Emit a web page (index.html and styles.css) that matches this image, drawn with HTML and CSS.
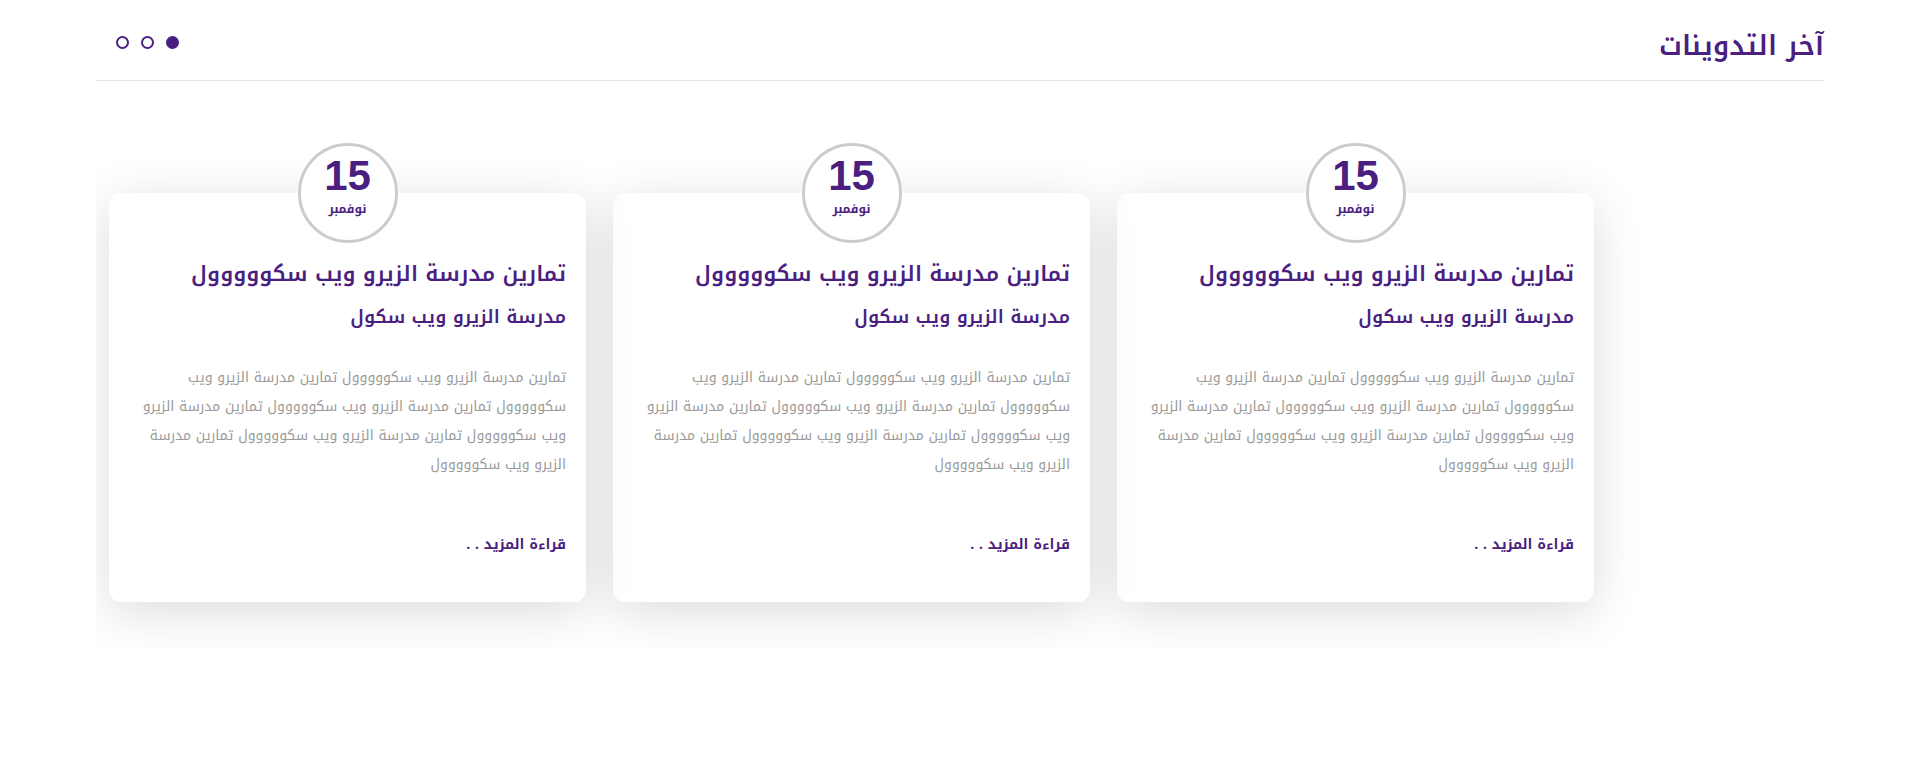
FILE: index.html
```html
<!DOCTYPE html>
<html lang="ar" dir="rtl">
<head>
<meta charset="utf-8">
<title>آخر التدوينات</title>
<link rel="stylesheet" href="styles.css">
</head>
<body>
<section class="blog">
  <header class="blog-head">
    <h2 class="blog-title">آخر التدوينات</h2>
    <div class="dots">
      <span class="dot active"></span>
      <span class="dot"></span>
      <span class="dot"></span>
    </div>
  </header>
  <div class="stage-outer">
    <div class="stage">
      <article class="card">
        <div class="date"><span class="day">15</span><span class="month">نوفمبر</span></div>
        <h3 class="card-title">تمارين مدرسة الزيرو ويب سكووووول</h3>
        <h4 class="card-sub">مدرسة الزيرو ويب سكول</h4>
        <p class="card-text">تمارين مدرسة الزيرو ويب سكووووول تمارين مدرسة الزيرو ويب سكووووول تمارين مدرسة الزيرو ويب سكووووول تمارين مدرسة الزيرو ويب سكووووول تمارين مدرسة الزيرو ويب سكووووول تمارين مدرسة الزيرو ويب سكووووول</p>
        <a class="more" href="#">قراءة المزيد . .</a>
      </article>
      <article class="card">
        <div class="date"><span class="day">15</span><span class="month">نوفمبر</span></div>
        <h3 class="card-title">تمارين مدرسة الزيرو ويب سكووووول</h3>
        <h4 class="card-sub">مدرسة الزيرو ويب سكول</h4>
        <p class="card-text">تمارين مدرسة الزيرو ويب سكووووول تمارين مدرسة الزيرو ويب سكووووول تمارين مدرسة الزيرو ويب سكووووول تمارين مدرسة الزيرو ويب سكووووول تمارين مدرسة الزيرو ويب سكووووول تمارين مدرسة الزيرو ويب سكووووول</p>
        <a class="more" href="#">قراءة المزيد . .</a>
      </article>
      <article class="card">
        <div class="date"><span class="day">15</span><span class="month">نوفمبر</span></div>
        <h3 class="card-title">تمارين مدرسة الزيرو ويب سكووووول</h3>
        <h4 class="card-sub">مدرسة الزيرو ويب سكول</h4>
        <p class="card-text">تمارين مدرسة الزيرو ويب سكووووول تمارين مدرسة الزيرو ويب سكووووول تمارين مدرسة الزيرو ويب سكووووول تمارين مدرسة الزيرو ويب سكووووول تمارين مدرسة الزيرو ويب سكووووول تمارين مدرسة الزيرو ويب سكووووول</p>
        <a class="more" href="#">قراءة المزيد . .</a>
      </article>
    </div>
  </div>
</section>
</body>
</html>
```
FILE: styles.css
```css
* { box-sizing: border-box; }
html, body { margin: 0; padding: 0; background: #fff; }
body {
  font-family: "Noto Kufi Arabic", "Droid Arabic Kufi", "Liberation Sans", sans-serif;
  color: #4a1f80;
}
.blog {
  width: 1728px;
  margin: 0 auto;
}
.blog-head {
  display: flex;
  justify-content: space-between;
  align-items: center;
  height: 81px;
  padding-top: 14px;
  border-bottom: 1px solid #e6e6e6;
}
.blog-title {
  margin: 0;
  font-size: 27.5px;
  font-weight: 600;
  line-height: 1;
  color: #4a1f80;
}
.dots {
  display: flex;
  gap: 12px;
  margin-left: 20px;
  margin-top: -9px;
}
.dot {
  width: 13px;
  height: 13px;
  border-radius: 50%;
  border: 2px solid #4a1f80;
}
.dot.active { background: #4a1f80; }
.stage-outer {
  overflow: hidden;
  padding: 112px 0 48px;
}
.stage {
  display: flex;
  gap: 27px;
  padding-right: 230px;
}
.card {
  position: relative;
  width: 477px;
  height: 409px;
  background: #fff;
  border-radius: 12px;
  box-shadow: 0 10px 50px rgba(0, 0, 0, 0.14);
  padding: 63px 20px 0 20px;
  display: flex;
  flex-direction: column;
  align-items: flex-start;
}
.date {
  position: absolute;
  top: -50px;
  left: 50%;
  transform: translateX(-50%);
  width: 100px;
  height: 100px;
  border-radius: 50%;
  border: 3px solid #cccccc;
  background: #fff;
  display: flex;
  flex-direction: column;
  align-items: center;
}
.day {
  font-family: "Liberation Sans", Arial, sans-serif;
  font-weight: 700;
  font-size: 42px;
  line-height: 1;
  margin-top: 9px;
  color: #4a1f80;
}
.month {
  font-size: 12px;
  font-weight: 700;
  margin-top: 1px;
  color: #4a1f80;
}
.card-title {
  margin: 0;
  font-size: 21.6px;
  font-weight: 600;
  line-height: 36px;
}
.card-sub {
  margin: 10px 0 0;
  font-size: 18.5px;
  font-weight: 600;
  line-height: 30px;
}
.card-text {
  margin: 31px 0 0;
  font-size: 14px;
  line-height: 29px;
  color: #9a9a9a;
  max-width: 425px;
}
.more {
  margin-top: auto;
  margin-bottom: 44px;
  font-size: 14px;
  font-weight: 700;
  color: #4a1f80;
  text-decoration: none;
}
```
